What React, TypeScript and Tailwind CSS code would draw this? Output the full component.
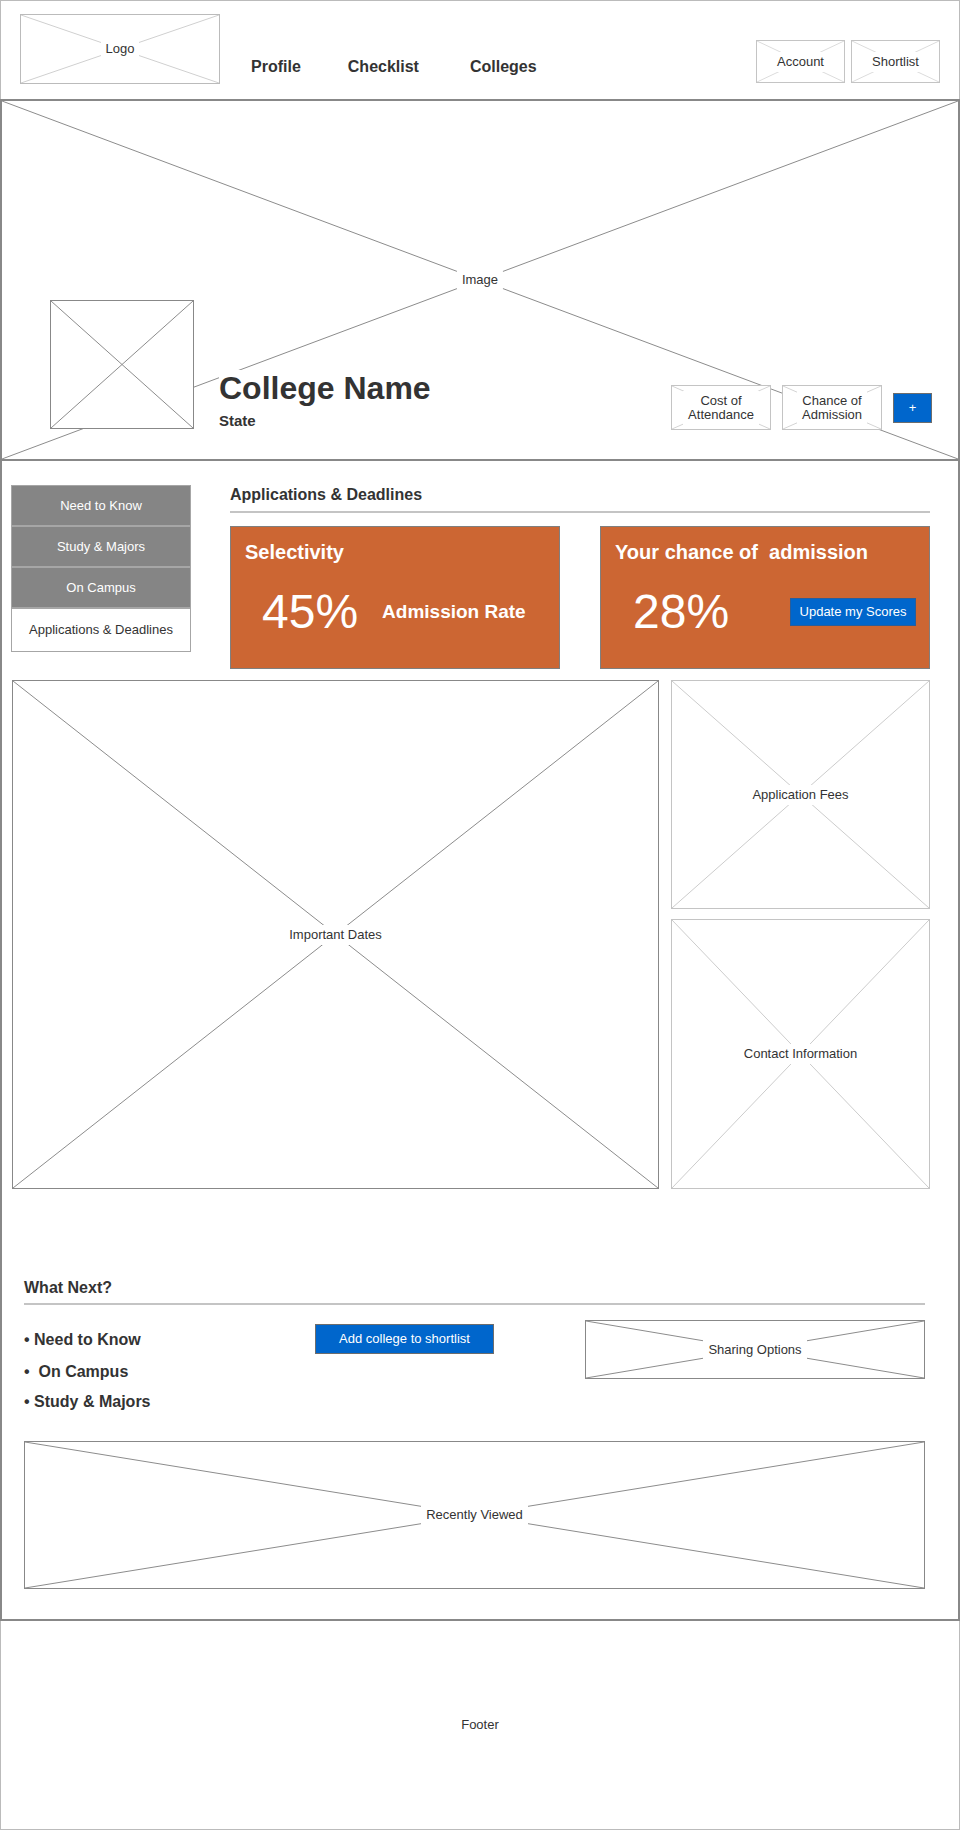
import React from "react";

function Cross({ stroke }: { stroke: string }) {
  return (
    <svg
      className="absolute inset-0 h-full w-full"
      viewBox="0 0 100 100"
      preserveAspectRatio="none"
    >
      <line x1="0" y1="0" x2="100" y2="100" stroke={stroke} strokeWidth="1" vectorEffect="non-scaling-stroke" />
      <line x1="100" y1="0" x2="0" y2="100" stroke={stroke} strokeWidth="1" vectorEffect="non-scaling-stroke" />
    </svg>
  );
}

function Box({
  label,
  className,
  stroke
}: {
  label?: React.ReactNode;
  className: string;
  stroke: string;
}) {
  return (
    <div className={"relative flex items-center justify-center bg-white " + className}>
      <Cross stroke={stroke} />
      {label && (
        <span className="relative bg-white px-[5px] py-[3px] text-center text-[13px] leading-[14px] text-[#333]">
          {label}
        </span>
      )}
    </div>
  );
}

export default function App() {

  const sideItems = ["Need to Know", "Study & Majors", "On Campus"];

  return (
    <div className="w-[960px] bg-white font-['Liberation_Sans',Arial,sans-serif] text-[#333]">

      {/* HEADER */}

      <header className="flex h-[99px] items-start border-x border-t border-[#bbb] pl-[19px] pr-[19px]">

        <Box
          label="Logo"
          className="mt-[13px] h-[70px] w-[200px] border border-[#bbb]"
          stroke="#d0d0d0"
        />

        <nav className="ml-[31px] mt-[56px] flex text-[16px] font-bold leading-[20px]">
          <a>Profile</a>
          <a className="ml-[47px]">Checklist</a>
          <a className="ml-[51px]">Colleges</a>
        </nav>

        <div className="ml-auto mt-[39px] flex gap-[6px]">
          <Box label="Account" className="h-[43px] w-[89px] border border-[#c4c4c4]" stroke="#dcdcdc" />
          <Box label="Shortlist" className="h-[43px] w-[89px] border border-[#c4c4c4]" stroke="#dcdcdc" />
        </div>

      </header>

      {/* HERO */}

      <section className="relative flex h-[362px] items-end border-2 border-[#888] pb-[29px] pl-[48px] pr-[26px]">

        <Cross stroke="#8c8c8c" />

        <span className="absolute left-1/2 top-1/2 -translate-x-1/2 -translate-y-1/2 bg-white px-[5px] py-[3px] text-[13px] leading-[14px]">
          Image
        </span>

        <Box className="mb-px h-[129px] w-[144px] border border-[#888]" stroke="#8c8c8c" />

        <div className="relative ml-[25px] flex flex-col bg-white">
          <h1 className="text-[32px] font-bold leading-[36px]">
            College Name
          </h1>
          <p className="mt-[6px] text-[15px] font-bold leading-[18px]">
            State
          </p>
        </div>

        <div className="relative ml-auto flex items-center gap-[11px]">
          <Box
            label={<>Cost of<br />Attendance</>}
            className="h-[45px] w-[100px] border border-[#c4c4c4]"
            stroke="#d4d4d4"
          />
          <Box
            label={<>Chance of<br />Admission</>}
            className="h-[45px] w-[100px] border border-[#c4c4c4]"
            stroke="#d4d4d4"
          />
          <button className="h-[30px] w-[39px] border border-[#6d6d6d] bg-[#0066cc] text-[13px] text-white">
            +
          </button>
        </div>

      </section>

      {/* MAIN */}

      <main className="border-x-2 border-b-2 border-[#888] pb-[30px] pt-[24px]">

        <div className="pl-[9px] pr-[28px]">

          <div className="flex gap-[39px]">

            <div className="w-[180px] self-start border border-[#a6a6a6] text-[13px]">
              {sideItems.map((item) => (
                <div
                  key={item}
                  className="flex h-[41px] items-center justify-center border-b-2 border-[#a6a6a6] bg-[#858585] text-white"
                >
                  {item}
                </div>
              ))}
              <div className="flex h-[42px] items-center justify-center bg-white">
                Applications &amp; Deadlines
              </div>
            </div>

            <div className="flex-1">

              <h2 className="border-b-2 border-[#c4c4c4] pb-[6px] text-[16px] font-bold leading-[20px]">
                Applications &amp; Deadlines
              </h2>

              <div className="mt-[13px] grid grid-cols-2 gap-[40px]">

                <div className="h-[143px] border border-[#7f7f7f] bg-[#cc6633] pl-[14px] pt-[13px] text-white">
                  <h3 className="text-[20px] font-bold leading-[24px]">
                    Selectivity
                  </h3>
                  <div className="mt-[24px] flex items-center pl-[17px]">
                    <span className="text-[48px] leading-[48px]">45%</span>
                    <span className="ml-[24px] text-[19px] font-bold leading-[24px]">
                      Admission Rate
                    </span>
                  </div>
                </div>

                <div className="h-[143px] border border-[#7f7f7f] bg-[#cc6633] pl-[14px] pr-[13px] pt-[13px] text-white">
                  <h3 className="whitespace-pre text-[20px] font-bold leading-[24px]">
                    Your chance of  admission
                  </h3>
                  <div className="mt-[24px] flex items-center justify-between pl-[18px]">
                    <span className="text-[48px] leading-[48px]">28%</span>
                    <button className="h-[28px] w-[126px] border border-[#2a5d9a] bg-[#0066cc] text-[13px] text-white">
                      Update my Scores
                    </button>
                  </div>
                </div>

              </div>

            </div>

          </div>

          <div className="ml-px mt-[11px] flex gap-[12px]">

            <Box
              label="Important Dates"
              className="h-[509px] w-[647px] border border-[#888]"
              stroke="#8c8c8c"
            />

            <div className="flex w-[259px] flex-col gap-[10px]">
              <Box
                label="Application Fees"
                className="h-[229px] border border-[#c4c4c4]"
                stroke="#cccccc"
              />
              <Box
                label="Contact Information"
                className="h-[270px] border border-[#c4c4c4]"
                stroke="#cccccc"
              />
            </div>

          </div>

        </div>

        {/* WHAT NEXT */}

        <div className="mt-[89px] pl-[22px] pr-[33px]">

          <h2 className="border-b-2 border-[#c4c4c4] pb-[5px] text-[16px] font-bold leading-[20px]">
            What Next?
          </h2>

          <div className="mt-[15px] flex items-start">

            <ul className="mt-[10px] w-[291px] text-[16px] font-bold leading-[20px]">
              <li className="whitespace-pre">• Need to Know</li>
              <li className="mt-[12px] whitespace-pre">•  On Campus</li>
              <li className="mt-[10px] whitespace-pre">• Study &amp; Majors</li>
            </ul>

            <button className="mt-[4px] h-[30px] w-[179px] border border-[#6d6d6d] bg-[#0066cc] text-[13px] text-white">
              Add college to shortlist
            </button>

            <Box
              label="Sharing Options"
              className="ml-auto h-[59px] w-[340px] border border-[#888]"
              stroke="#8c8c8c"
            />

          </div>

          <Box
            label="Recently Viewed"
            className="mt-[29px] h-[148px] border border-[#888]"
            stroke="#8c8c8c"
          />

        </div>

      </main>

      {/* FOOTER */}

      <footer className="flex h-[209px] items-center justify-center border-x border-b border-[#bbb] text-[13px]">
        Footer
      </footer>

    </div>
  );
}
